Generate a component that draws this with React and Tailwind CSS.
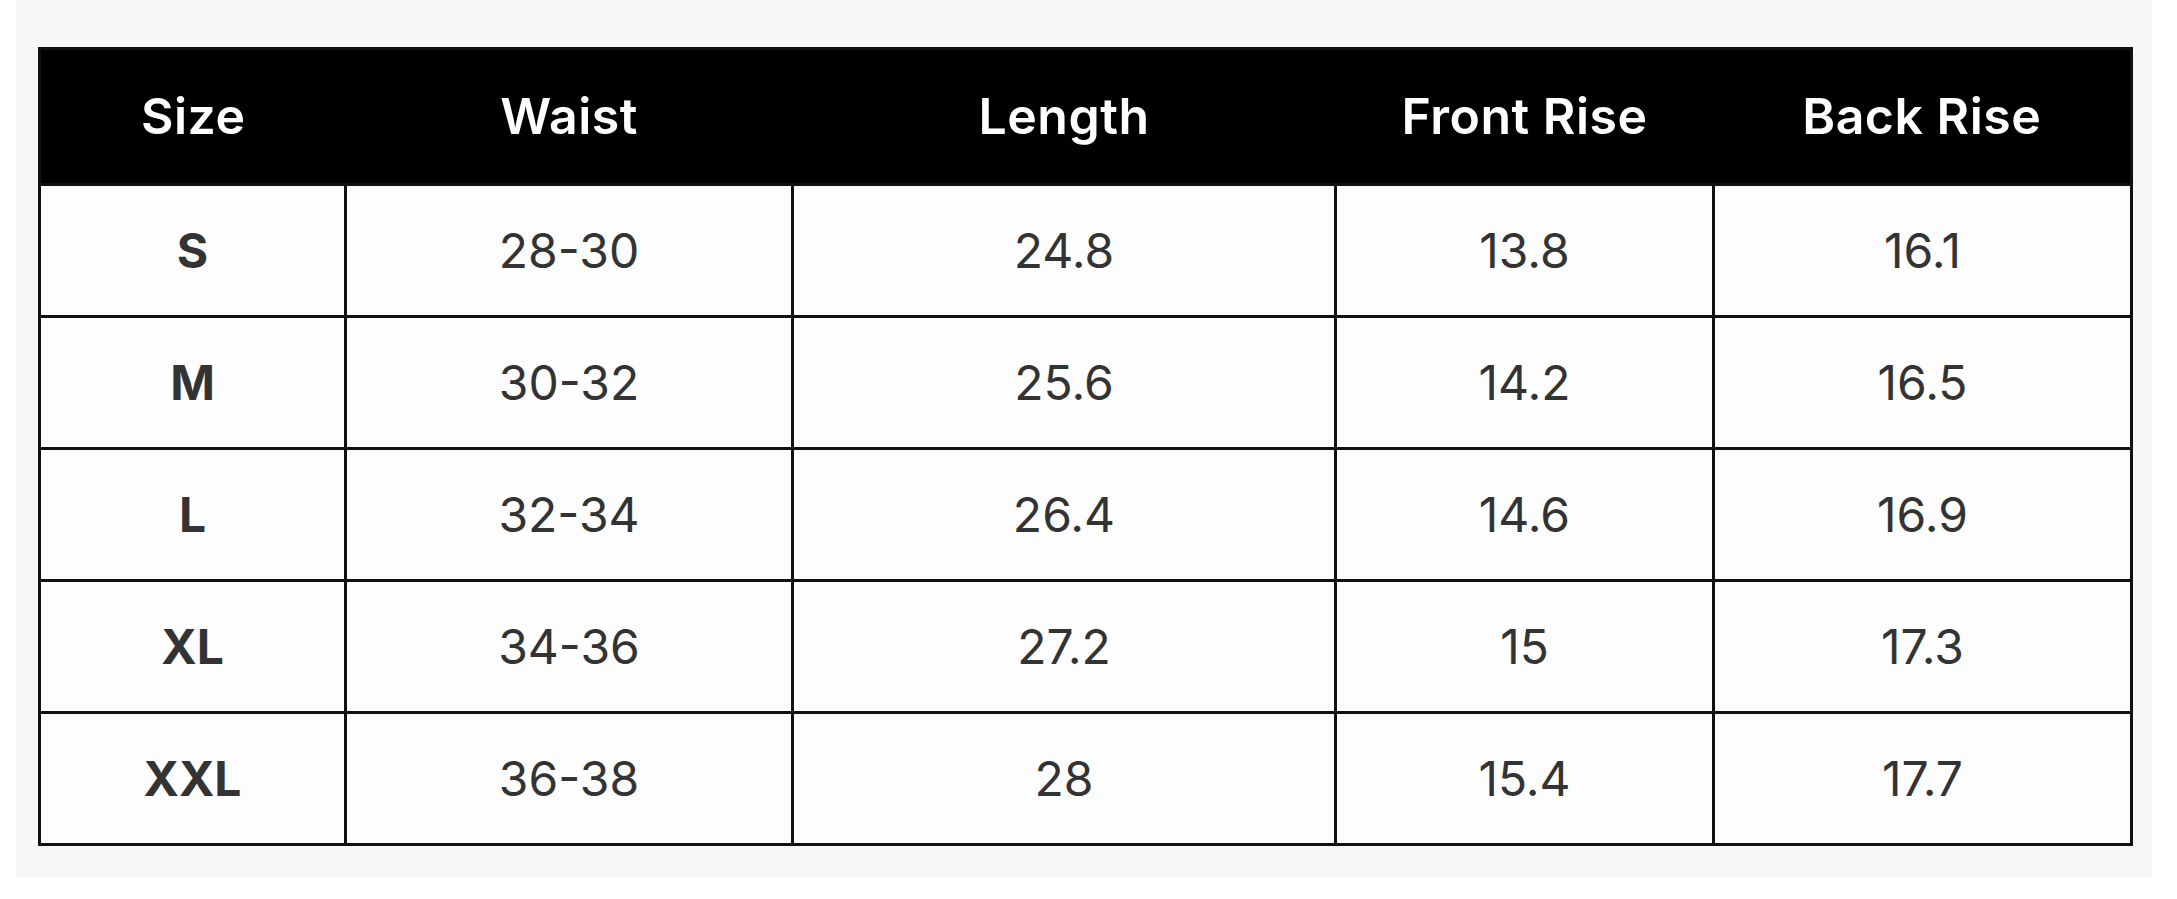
import React from "react";

const rows = [
  ["S", "28-30", "24.8", "13.8", "16.1"],
  ["M", "30-32", "25.6", "14.2", "16.5"],
  ["L", "32-34", "26.4", "14.6", "16.9"],
  ["XL", "34-36", "27.2", "15", "17.3"],
  ["XXL", "36-38", "28", "15.4", "17.7"],
];

const headers = ["Size", "Waist", "Length", "Front Rise", "Back Rise"];

export default function App() {
  return (
    <div
      className="w-[2177px] h-[899px] bg-white pl-[16px] pr-[25px]"
      style={{ fontFamily: "Inter, Roboto, 'Liberation Sans', sans-serif" }}
    >
      <div className="bg-[#f7f7f7] pt-[47px] pb-[31px] px-[22px]">
        <table className="w-[2092px] border-collapse border-[3px] border-[#111] table-fixed">
          <colgroup>
            <col className="w-[306px]" />
            <col className="w-[447px]" />
            <col className="w-[543px]" />
            <col className="w-[378px]" />
            <col className="w-[418px]" />
          </colgroup>
          <thead>
            <tr className="bg-black h-[136px]">
              {headers.map((h) => (
                <th
                  key={h}
                  className="text-white font-semibold text-[50px] tracking-[0.01em] text-center align-middle"
                >
                  {h}
                </th>
              ))}
            </tr>
          </thead>
          <tbody>
            {rows.map((r) => (
              <tr key={r[0]} className="h-[132px] bg-[#fdfdfd]">
                {r.map((c, i) => (
                  <td
                    key={i}
                    className={
                      "border-[3px] border-[#111] text-center align-middle text-[48px] text-[#333] " +
                      (i === 0 ? "font-bold" : "font-normal")
                    }
                  >
                    {c}
                  </td>
                ))}
              </tr>
            ))}
          </tbody>
        </table>
      </div>
    </div>
  );
}
